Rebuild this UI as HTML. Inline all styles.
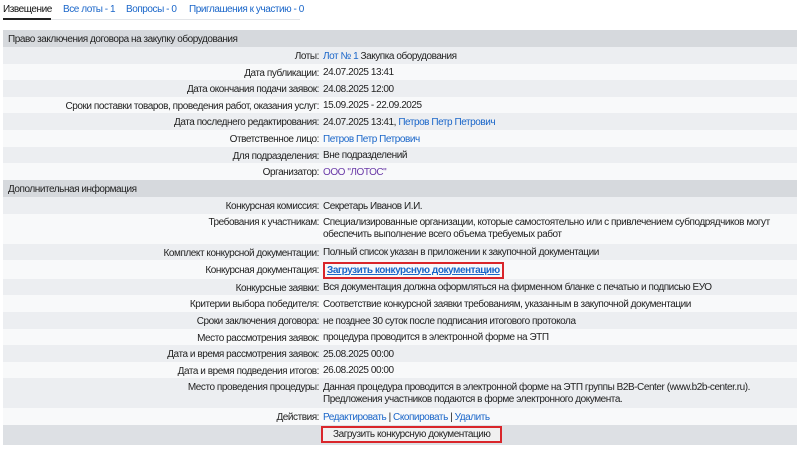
<!DOCTYPE html>
<html><head><meta charset="utf-8"><style>
*{margin:0;padding:0;box-sizing:border-box}
body{width:800px;height:450px;background:#fff;font-family:"Liberation Sans",Arial,sans-serif;font-size:10px;letter-spacing:-0.45px;color:#222;position:relative;overflow:hidden}
a{color:#1a66c9;text-decoration:none}
.tabs{position:absolute;left:3px;top:0;width:297px;height:20px;border-bottom:1px solid #e3e5e8}
.tabs span{position:absolute;top:4px;white-space:nowrap}
.r{position:absolute;left:3px;width:794px;display:flex;align-items:center;white-space:nowrap;padding-top:2px}
.g{background:#eceef1}.w{background:#f8f9fa}
.h{background:#d6d9dd;padding-left:5px}
.l{width:320px;text-align:right;padding-right:4px;flex:none}
.v{flex:1;line-height:12px}
.btn{display:inline-block;border:2px solid #d9262b;padding:1px 10px;background:#f0f0f0}
</style></head><body>
<div class="tabs">
<span style="left:0;color:#111">Извещение</span>
<div style="position:absolute;left:0;top:18px;width:48px;height:2px;background:#222"></div>
<span style="left:60px"><a>Все лоты - 1</a></span>
<span style="left:123px"><a>Вопросы - 0</a></span>
<span style="left:186px"><a>Приглашения к участию - 0</a></span>
</div>
<div class="r h" style="top:30px;height:17px">Право заключения договора на закупку оборудования</div>
<div class="r g" style="top:47px;height:17px"><div class="l">Лоты:</div><div class="v"><a>Лот № 1</a> Закупка оборудования</div></div>
<div class="r w" style="top:64px;height:16px"><div class="l">Дата публикации:</div><div class="v">24.07.2025 13:41</div></div>
<div class="r g" style="top:80px;height:17px"><div class="l">Дата окончания подачи заявок:</div><div class="v">24.08.2025 12:00</div></div>
<div class="r w" style="top:97px;height:16px"><div class="l">Сроки поставки товаров, проведения работ, оказания услуг:</div><div class="v">15.09.2025 - 22.09.2025</div></div>
<div class="r g" style="top:113px;height:17px"><div class="l">Дата последнего редактирования:</div><div class="v">24.07.2025 13:41, <a>Петров Петр Петрович</a></div></div>
<div class="r w" style="top:130px;height:17px"><div class="l">Ответственное лицо:</div><div class="v"><a>Петров Петр Петрович</a></div></div>
<div class="r g" style="top:147px;height:16px"><div class="l">Для подразделения:</div><div class="v">Вне подразделений</div></div>
<div class="r w" style="top:163px;height:17px"><div class="l">Организатор:</div><div class="v"><a style="color:#6a3aa8">ООО "ЛОТОС"</a></div></div>
<div class="r h" style="top:180px;height:17px">Дополнительная информация</div>
<div class="r g" style="top:197px;height:17px"><div class="l">Конкурсная комиссия:</div><div class="v">Секретарь Иванов И.И.</div></div>
<div class="r w" style="top:214px;height:30px;align-items:flex-start;padding-top:3px"><div class="l" style="line-height:12px">Требования к участникам:</div><div class="v">Специализированные организации, которые самостоятельно или с привлечением субподрядчиков могут<br>обеспечить выполнение всего объема требуемых работ</div></div>
<div class="r g" style="top:244px;height:16px"><div class="l">Комплект конкурсной документации:</div><div class="v">Полный список указан в приложении к закупочной документации</div></div>
<div class="r w" style="top:260px;height:19px"><div class="l">Конкурсная документация:</div><div class="v"><a style="font-weight:bold;text-decoration:underline;border:2px solid #d9262b;padding:1px 2px">Загрузить конкурсную документацию</a></div></div>
<div class="r g" style="top:279px;height:16px"><div class="l">Конкурсные заявки:</div><div class="v">Вся документация должна оформляться на фирменном бланке с печатью и подписью ЕУО</div></div>
<div class="r w" style="top:295px;height:17px"><div class="l">Критерии выбора победителя:</div><div class="v">Соответствие конкурсной заявки требованиям, указанным в закупочной документации</div></div>
<div class="r g" style="top:312px;height:17px"><div class="l">Сроки заключения договора:</div><div class="v">не позднее 30 суток после подписания итогового протокола</div></div>
<div class="r w" style="top:329px;height:16px"><div class="l">Место рассмотрения заявок:</div><div class="v">процедура проводится в электронной форме на ЭТП</div></div>
<div class="r g" style="top:345px;height:17px"><div class="l">Дата и время рассмотрения заявок:</div><div class="v">25.08.2025 00:00</div></div>
<div class="r w" style="top:362px;height:16px"><div class="l">Дата и время подведения итогов:</div><div class="v">26.08.2025 00:00</div></div>
<div class="r g" style="top:378px;height:30px;align-items:flex-start;padding-top:4px"><div class="l" style="line-height:12px">Место проведения процедуры:</div><div class="v">Данная процедура проводится в электронной форме на ЭТП группы B2B-Center (www.b2b-center.ru).<br>Предложения участников подаются в форме электронного документа.</div></div>
<div class="r w" style="top:408px;height:17px"><div class="l">Действия:</div><div class="v"><a>Редактировать</a> | <a>Скопировать</a> | <a>Удалить</a></div></div>
<div class="r" style="top:425px;height:20px;background:#dde0e4"><div style="position:absolute;left:318px;top:1px" class="btn">Загрузить конкурсную документацию</div></div>
</body></html>
